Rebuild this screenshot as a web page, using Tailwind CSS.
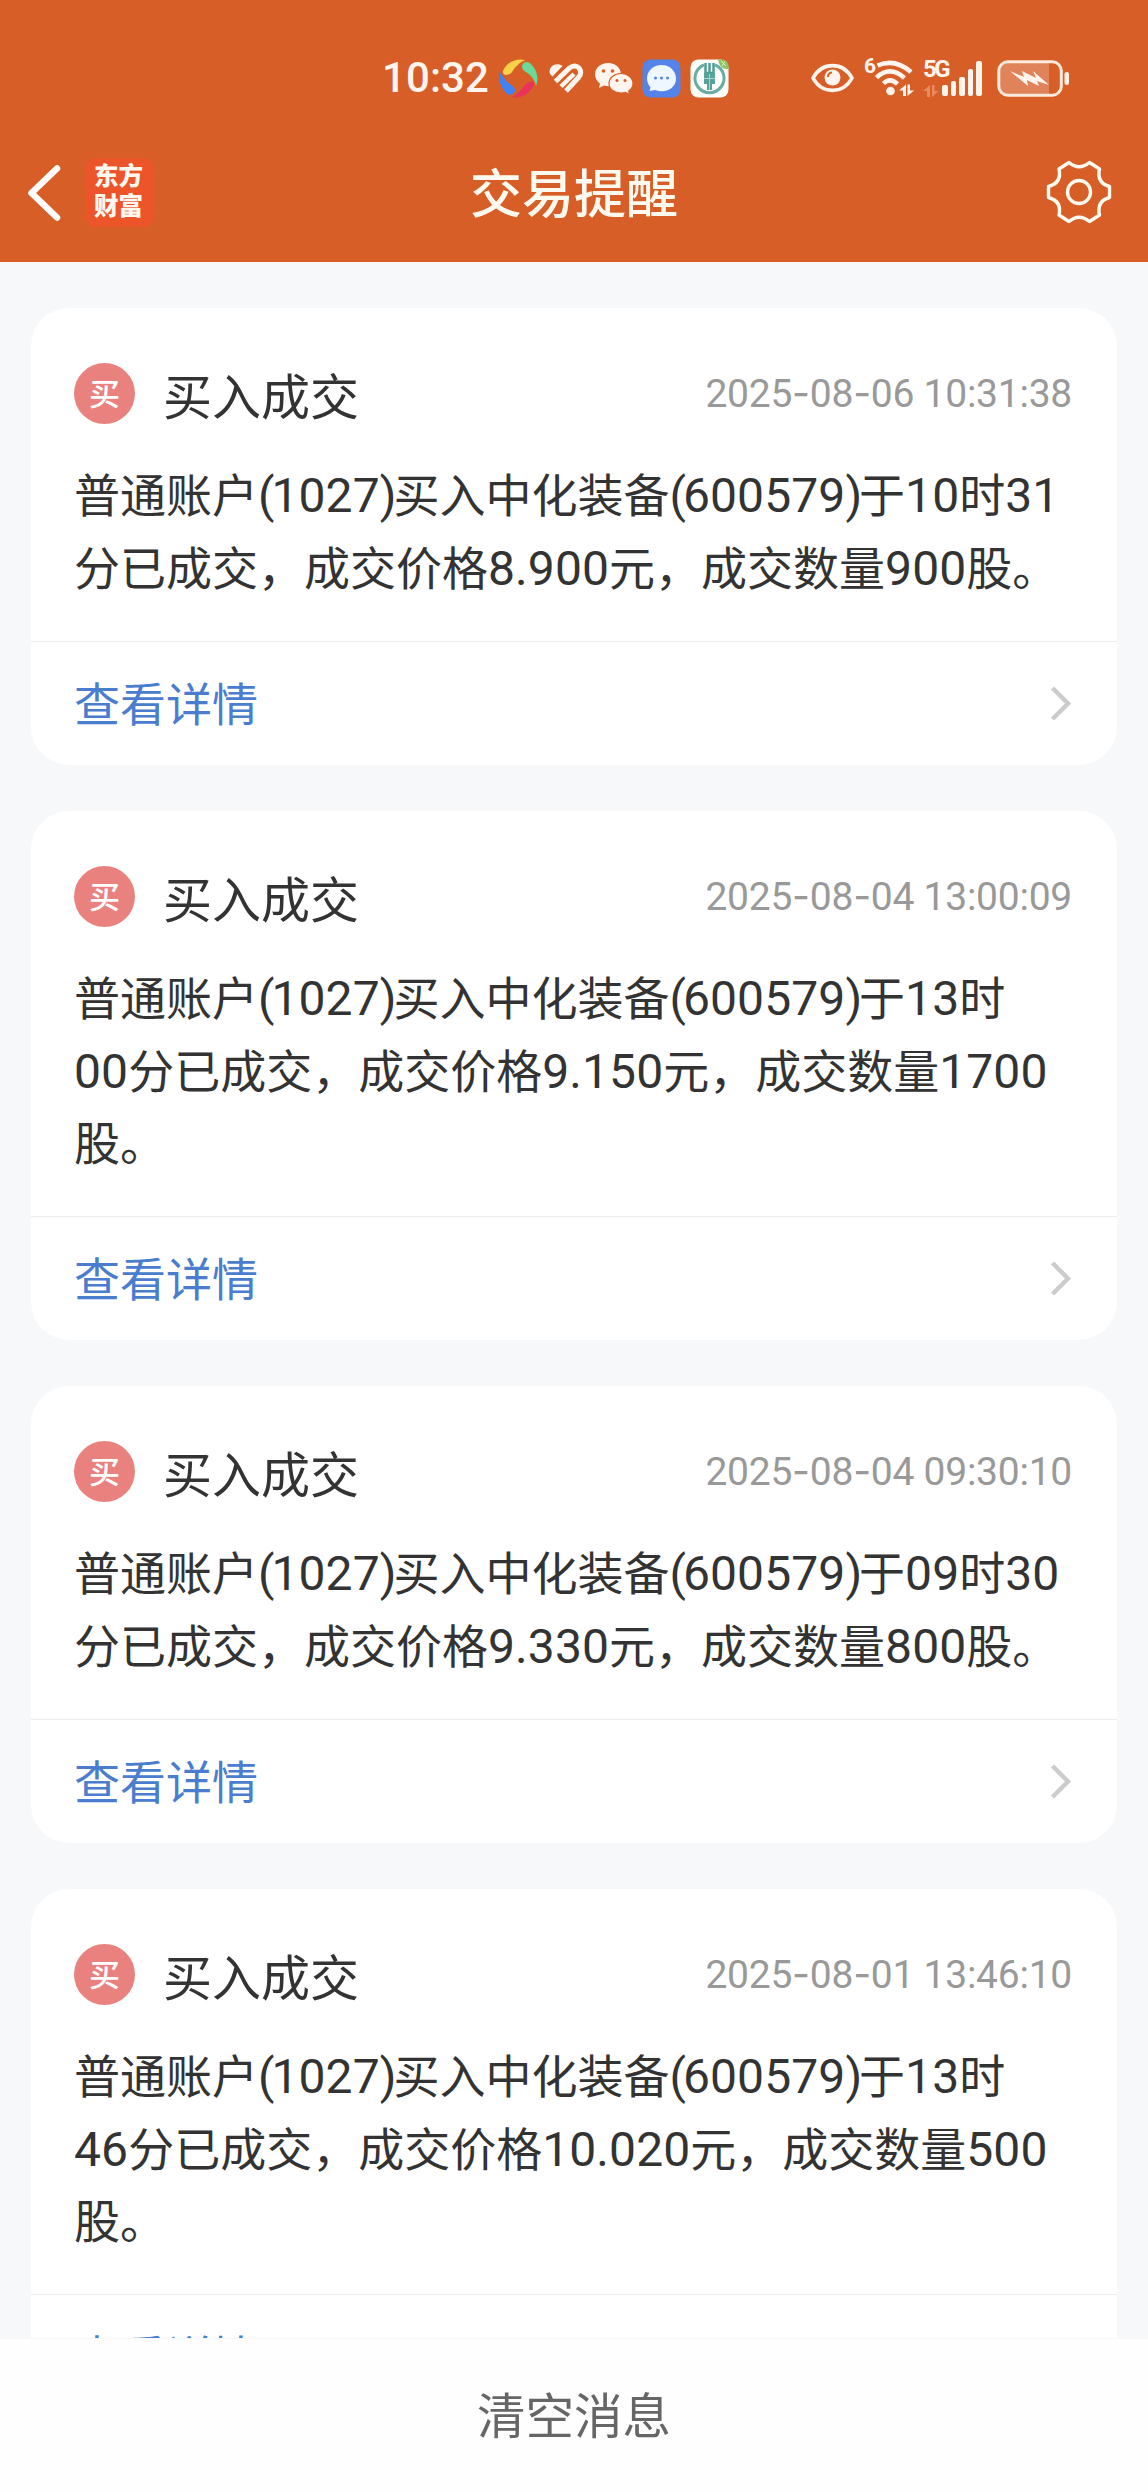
<!DOCTYPE html>
<html lang="zh-CN">
<head>
<meta charset="utf-8">
<title>交易提醒</title>
<script src="https://cdn.jsdelivr.net/npm/@tailwindcss/browser@4"></script>
</head>
<body class="bg-[#f7f8fa]">
<div class="flex h-[2492px] w-[1148px] flex-col overflow-hidden font-['Noto_Sans_CJK_SC',sans-serif] text-[#333]">

  <header class="flex h-[262px] shrink-0 flex-col bg-[#d75f27]">
    <!-- status bar -->
    <div class="flex h-[156px] items-center pl-[382px] text-[#fff5ee]">
      <span class="w-[117px] whitespace-nowrap font-[Roboto,sans-serif] text-[42px] font-medium leading-none tracking-[0.1px]">10:32</span>
      <svg class="h-[39px] w-[39px] shrink-0" viewBox="0 0 39 39">
        <path d="M4 12C8 3 17-1 26 1C21 3 16 8 13 13C10 17 3 17 4 12Z" fill="#fbd148"/>
        <path d="M23 7C24 2 29 2 32 5C38 11 40 19 37 27C36 21 32 16 27 13C24 11 23 10 23 7Z" fill="#6cd899"/>
        <path d="M35 25C32 34 22 40 13 38C19 35 22 31 26 26C29 22 36 21 35 25Z" fill="#e8345a"/>
        <path d="M16 32C15 36 10 37 7 34C1 28-1 20 2 12C3 18 7 22 12 26C15 28 16 29 16 32Z" fill="#3f82f5"/>
      </svg>
      <svg class="ml-[11px] h-[31px] w-[36px] shrink-0" viewBox="0 0 36 31" fill="none" stroke="#fff5ee">
        <path d="M.5 9C.5 2 8-1 13.500 3L3.500 13.500Q.5 11.500 .5 9Z" fill="#fff5ee" stroke="none"/>
        <path d="M6.500 18.500L20.500 5Q26 1 30 5Q33.500 10 29.500 14.500L17 28" stroke-width="5"/><path d="M12 23.500L25 11" stroke-width="4.500"/>
      </svg>
      <svg class="ml-[9px] h-[33px] w-[40px] shrink-0" viewBox="0 0 40 33">
        <path d="M14 1C6.500 1 1 6 1 12.500C1 16 3 19.500 6 21.500L5 26L10 23.500C13 24.500 17 24.500 19 23.500C27 20 28 13 26 8C24 3.500 19 1 14 1Z" fill="#fff5ee"/>
        <path d="M27 11.500C20 11.500 15 16 15 21.500C15 27 20 31 27 31Q29.500 31 31.500 30.300L35.500 32.500L34.700 29C37.500 27 39 24.500 39 21.500C39 16 34 11.500 27 11.500Z" fill="#fff5ee" stroke="#d75f27" stroke-width="1.200"/>
        <g fill="#d75f27"><circle cx="9.500" cy="9" r="1.800"/><circle cx="18.500" cy="9" r="1.800"/><circle cx="23" cy="18.500" r="1.500"/><circle cx="31" cy="18.500" r="1.500"/></g>
      </svg>
      <svg class="ml-[8px] h-[39px] w-[39px] shrink-0" viewBox="0 0 39 39">
        <rect x=".5" y=".5" width="38" height="38" rx="8" fill="#5484ea"/>
        <path d="M19.500 6C11 6 5 12 5 19.500C5 23 6.500 26 8.500 28.500L7.500 32L13 31C24 35 34 29 34 19.500C34 12 28 6 19.500 6Z" fill="#eef6ff"/>
        <g fill="#5484ea"><circle cx="13.500" cy="19" r="1.500"/><circle cx="19.500" cy="19" r="1.500"/><circle cx="25.500" cy="19" r="1.500"/></g>
      </svg>
      <svg class="ml-[9px] h-[39px] w-[39px] shrink-0" viewBox="0 0 39 39">
        <rect x=".5" y=".5" width="38" height="38" rx="8" fill="#fffdfa"/>
        <path d="M28 .5H31Q38.500.5 38.500 8V10Q30 11 28 .5Z" fill="#8ac566"/>
        <path d="M31 2L36 7M35 2L32 7" stroke="#dff0c8" stroke-width="1"/>
        <path d="M14 5.800A14.500 14.500 0 1 0 25 5.800" fill="none" stroke="#68aca3" stroke-width="3"/>
        <path d="M15.500 4V14H23.500V4M19.500 4V14" fill="none" stroke="#4f9d94" stroke-width="2.500"/>
        <path d="M14 14H25V25H22V31H17V25H14Z" fill="#57a39a"/><path d="M14 19.500H25M19.500 15V31" stroke="#a9d3cc" stroke-width="1"/>
      </svg>

      <svg class="ml-[82px] h-[30px] w-[43px] shrink-0" viewBox="0 0 43 30">
        <path d="M2 15C11-1.500 32-1.500 41 15C32 31.500 11 31.500 2 15Z" fill="none" stroke="#fff5ee" stroke-width="3.600" stroke-linejoin="round"/>
        <circle cx="21.500" cy="14.500" r="8" fill="#fff5ee"/><path d="M17 14Q17 10 21 9.500" stroke="#d75f27" stroke-width="2" fill="none"/>
      </svg>
      <span class="ml-[10px] mb-[24px] w-[11px] font-[Roboto,sans-serif] text-[21px] font-bold leading-none">6</span>
      <svg class="h-[36px] w-[40px] shrink-0" viewBox="0 0 40 36" fill="none" stroke="#fff5ee">
        <path d="M2.500 5.500Q20-2 36 12M1.500 17.500Q15 5 29.500 18M8.500 23.500Q15 17 22.500 24" stroke-width="4.500"/>
        <circle cx="15.500" cy="31" r="4.300" fill="#fff5ee" stroke="none"/>
        <path d="M24 30.500L31 24.500V36H28V30.500ZM39 30.500L32.500 36V24.500H35V30.500Z" fill="#fff5ee" stroke="none"/>
      </svg>
      <div class="ml-[8px] mr-px flex h-[38px] w-[18px] shrink-0 flex-col justify-between">
        <span class="font-[Roboto,sans-serif] text-[24px] font-bold leading-[21px] tracking-[-2.5px]">5G</span>
        <svg class="h-[12px] w-[16px]" viewBox="0 0 16 12"><path d="M0 6L7 0V12H4V6ZM15.500 6L9 12V0H11.500V6Z" fill="#e98a5e"/></svg>
      </div>
      <div class="flex h-[35px] shrink-0 items-end gap-[3px]">
        <i class="h-[11px] w-[5.5px] rounded-xs bg-[#fff5ee]"></i><i class="h-[15px] w-[5.5px] rounded-xs bg-[#fff5ee]"></i><i class="h-[19px] w-[5.5px] rounded-xs bg-[#fff5ee]"></i><i class="h-[27px] w-[5.5px] rounded-xs bg-[#fff5ee]"></i><i class="h-[35px] w-[5.5px] rounded-xs bg-[#fff5ee]"></i>
      </div>
      <svg class="ml-[15px] h-[37px] w-[73px] shrink-0" viewBox="0 0 73 37">
        <path d="M10 3H52V34H10Q3 34 3 27V10Q3 3 10 3Z" fill="#e0835a"/>
        <rect x="1.800" y="1.800" width="62.500" height="33.400" rx="9" fill="none" stroke="#ffeadd" stroke-width="3"/>
        <rect x="67.500" y="12" width="4.500" height="13" rx="2.250" fill="#fff0e6"/>
        <path d="M13 11L27 17L25 11L39 18L36 11L52 25L40 21L42 26L30 20L31 26Z" fill="#fff5ee"/>
      </svg>
    </div>
    <!-- navigation bar -->
    <div class="flex h-[73px] items-center">
      <div class="flex w-[470px] items-center pl-[26px]">
        <svg class="h-[58px] w-[36px]" viewBox="0 0 36 58" fill="none" stroke="#fff" stroke-width="6.500" stroke-linecap="round" stroke-linejoin="round"><path d="M31 4.500L5.500 29L31 53.500"/></svg>
        <div class="ml-[23px] flex h-[69px] w-[69px] flex-col items-start justify-center rounded-xl bg-[#ec5429] pb-[5px] pl-[9px] text-[24.5px] font-black leading-[30px] text-[#fff8ee]"><span>东方</span><span>财富</span></div>
      </div>
      <h1 class="whitespace-nowrap pb-[4px] text-[52px] font-medium leading-[69px] text-[#fffaf0]">交易提醒</h1>
      <svg class="ml-auto mr-[18px] h-[84px] w-[100px]" viewBox="0 0 100 84" fill="none" stroke="#fffaf0" stroke-width="3.400" stroke-linejoin="round">
        <path d="M39 11.500Q49 20 59.500 11.500L69.500 18Q66.500 32 79.500 35.500V46.500Q66.500 50 69.500 64L59.500 70.500Q49 62 39 70.500L29 64Q32 50 18.500 46.500V35.500Q32 32 29 18Z"/>
        <circle cx="49" cy="41" r="11.500"/>
      </svg>
    </div>
  </header>

  <main class="flex min-h-0 flex-1 flex-col gap-[46px] overflow-hidden px-[31px] pt-[46px]">

    <article class="flex h-[457px] shrink-0 flex-col rounded-[38px] bg-white">
      <div class="flex items-center px-[43px] pt-[54px]">
        <span class="flex h-[61px] w-[61px] items-center justify-center rounded-full bg-[#e9827f] pb-[4px] text-[31px] font-medium leading-none text-white">买</span>
        <h2 class="ml-[28px] text-[49px] leading-[61px]">买入成交</h2>
        <time class="ml-auto mr-[2px] whitespace-nowrap font-[Roboto,sans-serif] text-[39px] leading-[61px] tracking-[-0.25px] text-[#999]">2025<span class="font-[Inter]">-</span>08<span class="font-[Inter]">-</span>06 10:31:38</time>
      </div>
      <p class="mt-[31px] whitespace-nowrap pl-[43px] text-[46px] leading-[72.5px]">普通账户<span class="font-[Roboto] text-[48px] leading-none tracking-[0.1px]"><span class="tracking-[-3px]">(</span>1027<span class="tracking-[-3px]">)</span></span>买入中化装备<span class="font-[Roboto] text-[48px] leading-none tracking-[0.1px]"><span class="tracking-[-3px]">(</span>600579<span class="tracking-[-3px]">)</span></span>于<span class="font-[Roboto] text-[48px] leading-none tracking-[0.1px]">10</span>时<span class="font-[Roboto] text-[48px] leading-none tracking-[0.1px]">31</span><br>分已成交，成交价格<span class="font-[Roboto] text-[48px] leading-none tracking-[0.1px]">8.900</span>元，成交数量<span class="font-[Roboto] text-[48px] leading-none tracking-[0.1px]">900</span>股。</p>
      <div class="mt-auto flex h-[124px] items-center justify-between border-t border-[#ededef] pl-[43px] pr-[45px]">
        <a class="pb-[6px] text-[46px] leading-none text-[#4a7dce]">查看详情</a>
        <svg class="h-[36px] w-[22px]" viewBox="0 0 22 36" fill="none" stroke="#ccc" stroke-width="4.500"><path d="M2.500 2L18 17.500L2.500 33"/></svg>
      </div>
    </article>

    <article class="flex h-[529px] shrink-0 flex-col rounded-[38px] bg-white">
      <div class="flex items-center px-[43px] pt-[54px]">
        <span class="flex h-[61px] w-[61px] items-center justify-center rounded-full bg-[#e9827f] pb-[4px] text-[31px] font-medium leading-none text-white">买</span>
        <h2 class="ml-[28px] text-[49px] leading-[61px]">买入成交</h2>
        <time class="ml-auto mr-[2px] whitespace-nowrap font-[Roboto,sans-serif] text-[39px] leading-[61px] tracking-[-0.25px] text-[#999]">2025<span class="font-[Inter]">-</span>08<span class="font-[Inter]">-</span>04 13:00:09</time>
      </div>
      <p class="mt-[31px] whitespace-nowrap pl-[43px] text-[46px] leading-[72.5px]">普通账户<span class="font-[Roboto] text-[48px] leading-none tracking-[0.1px]"><span class="tracking-[-3px]">(</span>1027<span class="tracking-[-3px]">)</span></span>买入中化装备<span class="font-[Roboto] text-[48px] leading-none tracking-[0.1px]"><span class="tracking-[-3px]">(</span>600579<span class="tracking-[-3px]">)</span></span>于<span class="font-[Roboto] text-[48px] leading-none tracking-[0.1px]">13</span>时<br><span class="font-[Roboto] text-[48px] leading-none tracking-[0.1px]">00</span>分已成交，成交价格<span class="font-[Roboto] text-[48px] leading-none tracking-[0.1px]">9.150</span>元，成交数量<span class="font-[Roboto] text-[48px] leading-none tracking-[0.1px]">1700</span><br>股。</p>
      <div class="mt-auto flex h-[124px] items-center justify-between border-t border-[#ededef] pl-[43px] pr-[45px]">
        <a class="pb-[6px] text-[46px] leading-none text-[#4a7dce]">查看详情</a>
        <svg class="h-[36px] w-[22px]" viewBox="0 0 22 36" fill="none" stroke="#ccc" stroke-width="4.500"><path d="M2.500 2L18 17.500L2.500 33"/></svg>
      </div>
    </article>

    <article class="flex h-[457px] shrink-0 flex-col rounded-[38px] bg-white">
      <div class="flex items-center px-[43px] pt-[54px]">
        <span class="flex h-[61px] w-[61px] items-center justify-center rounded-full bg-[#e9827f] pb-[4px] text-[31px] font-medium leading-none text-white">买</span>
        <h2 class="ml-[28px] text-[49px] leading-[61px]">买入成交</h2>
        <time class="ml-auto mr-[2px] whitespace-nowrap font-[Roboto,sans-serif] text-[39px] leading-[61px] tracking-[-0.25px] text-[#999]">2025<span class="font-[Inter]">-</span>08<span class="font-[Inter]">-</span>04 09:30:10</time>
      </div>
      <p class="mt-[31px] whitespace-nowrap pl-[43px] text-[46px] leading-[72.5px]">普通账户<span class="font-[Roboto] text-[48px] leading-none tracking-[0.1px]"><span class="tracking-[-3px]">(</span>1027<span class="tracking-[-3px]">)</span></span>买入中化装备<span class="font-[Roboto] text-[48px] leading-none tracking-[0.1px]"><span class="tracking-[-3px]">(</span>600579<span class="tracking-[-3px]">)</span></span>于<span class="font-[Roboto] text-[48px] leading-none tracking-[0.1px]">09</span>时<span class="font-[Roboto] text-[48px] leading-none tracking-[0.1px]">30</span><br>分已成交，成交价格<span class="font-[Roboto] text-[48px] leading-none tracking-[0.1px]">9.330</span>元，成交数量<span class="font-[Roboto] text-[48px] leading-none tracking-[0.1px]">800</span>股。</p>
      <div class="mt-auto flex h-[124px] items-center justify-between border-t border-[#ededef] pl-[43px] pr-[45px]">
        <a class="pb-[6px] text-[46px] leading-none text-[#4a7dce]">查看详情</a>
        <svg class="h-[36px] w-[22px]" viewBox="0 0 22 36" fill="none" stroke="#ccc" stroke-width="4.500"><path d="M2.500 2L18 17.500L2.500 33"/></svg>
      </div>
    </article>

    <article class="flex h-[529px] shrink-0 flex-col rounded-[38px] bg-white">
      <div class="flex items-center px-[43px] pt-[54px]">
        <span class="flex h-[61px] w-[61px] items-center justify-center rounded-full bg-[#e9827f] pb-[4px] text-[31px] font-medium leading-none text-white">买</span>
        <h2 class="ml-[28px] text-[49px] leading-[61px]">买入成交</h2>
        <time class="ml-auto mr-[2px] whitespace-nowrap font-[Roboto,sans-serif] text-[39px] leading-[61px] tracking-[-0.25px] text-[#999]">2025<span class="font-[Inter]">-</span>08<span class="font-[Inter]">-</span>01 13:46:10</time>
      </div>
      <p class="mt-[31px] whitespace-nowrap pl-[43px] text-[46px] leading-[72.5px]">普通账户<span class="font-[Roboto] text-[48px] leading-none tracking-[0.1px]"><span class="tracking-[-3px]">(</span>1027<span class="tracking-[-3px]">)</span></span>买入中化装备<span class="font-[Roboto] text-[48px] leading-none tracking-[0.1px]"><span class="tracking-[-3px]">(</span>600579<span class="tracking-[-3px]">)</span></span>于<span class="font-[Roboto] text-[48px] leading-none tracking-[0.1px]">13</span>时<br><span class="font-[Roboto] text-[48px] leading-none tracking-[0.1px]">46</span>分已成交，成交价格<span class="font-[Roboto] text-[48px] leading-none tracking-[0.1px]">10.020</span>元，成交数量<span class="font-[Roboto] text-[48px] leading-none tracking-[0.1px]">500</span><br>股。</p>
      <div class="mt-auto flex h-[124px] items-center justify-between border-t border-[#ededef] pl-[43px] pr-[45px]">
        <a class="pb-[6px] text-[46px] leading-none text-[#4a7dce]">查看详情</a>
        <svg class="h-[36px] w-[22px]" viewBox="0 0 22 36" fill="none" stroke="#ccc" stroke-width="4.500"><path d="M2.500 2L18 17.500L2.500 33"/></svg>
      </div>
    </article>
  </main>

  <footer class="flex h-[154px] shrink-0 items-center justify-center border-t border-[#f7f7f8] bg-[#fefefe] pb-[4px] text-[48.5px] leading-none text-[#666]">清空消息</footer>
</div>
</body>
</html>
